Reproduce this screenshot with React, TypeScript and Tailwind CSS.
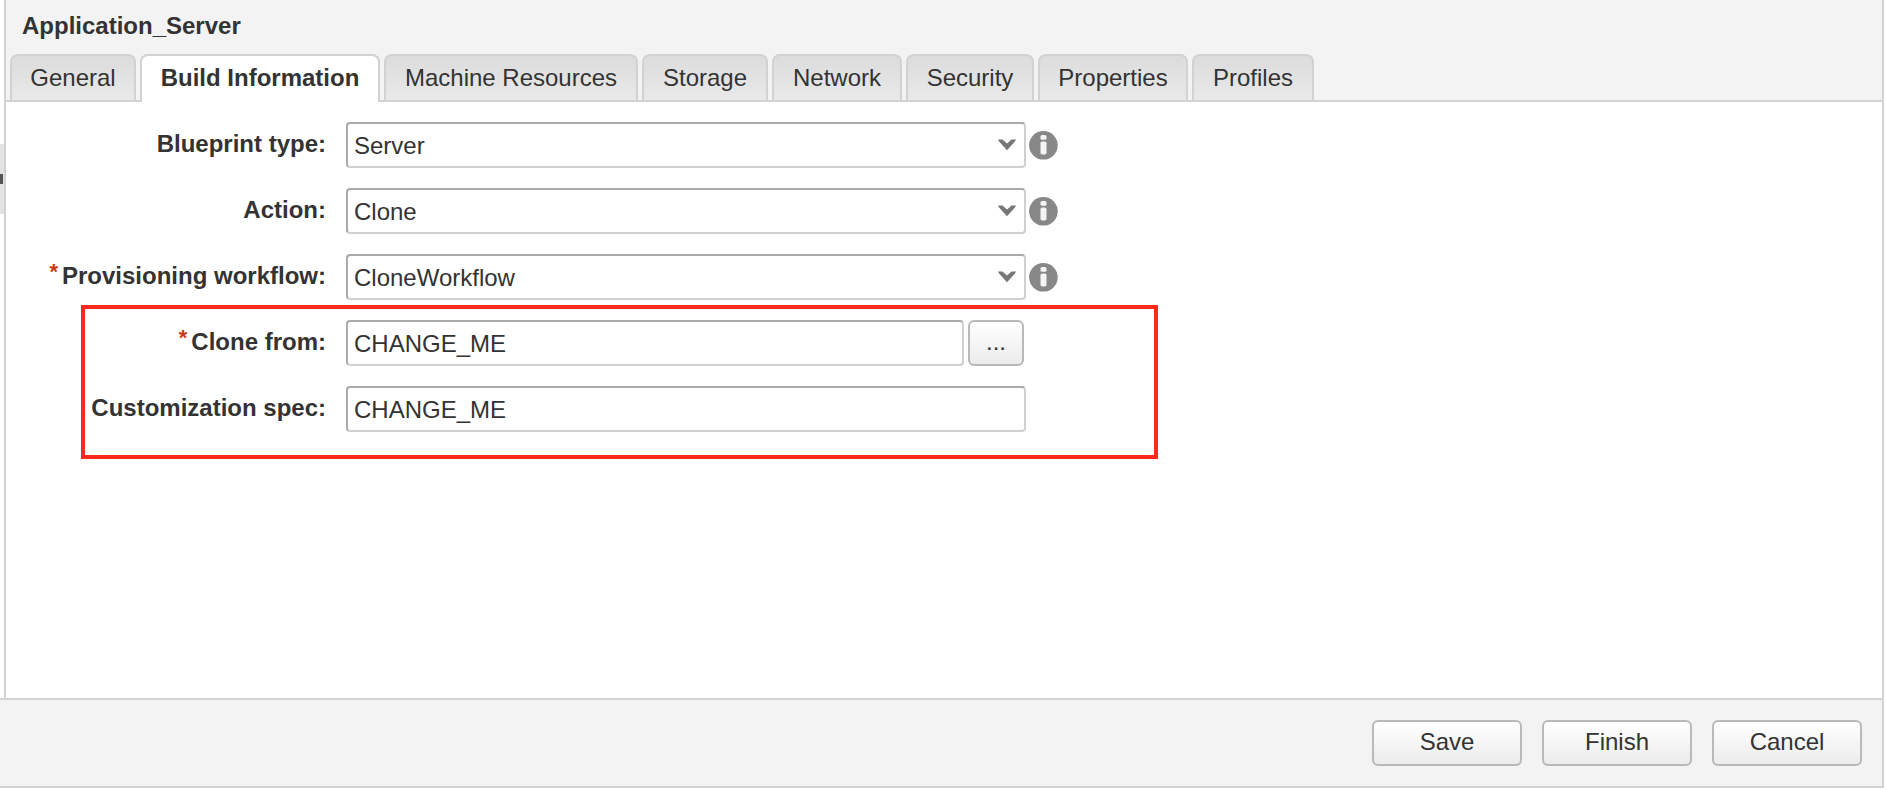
import { useState } from "react"
import type { ReactNode } from "react"
import clsx from "clsx"

const tabs = [
  { name: "General", width: "w-[126px]" },
  { name: "Build Information", width: "w-[240px]" },
  { name: "Machine Resources", width: "w-[254px]" },
  { name: "Storage", width: "w-[126px]" },
  { name: "Network", width: "w-[130px]" },
  { name: "Security", width: "w-[128px]" },
  { name: "Properties", width: "w-[150px]" },
  { name: "Profiles", width: "w-[122px]" },
]

const fieldStyle =
  "h-[46px] w-full rounded border-2 border-t-[#aaaaaa] border-l-[#aaaaaa] border-r-[#d0d0d0] border-b-[#d0d0d0] bg-white px-1.5 pt-0.5 text-[#333333] outline-none"

const buttonStyle =
  "h-[46px] rounded-md border-2 border-[#b9b9b9] bg-gradient-to-b from-white to-[#ececec] pb-0.5 text-[#333333]"

function InfoIcon() {
  return (
    <svg className="h-[30px] w-[30px]" viewBox="0 0 30 30" aria-hidden="true">
      <circle cx="15.4" cy="15.3" r="14.3" fill="#888888" />
      <rect x="12.5" y="5" width="6" height="4.8" rx="1.6" fill="#f4f4f4" />
      <rect x="12.5" y="11.6" width="6" height="12.8" rx="1.6" fill="#f4f4f4" />
    </svg>
  )
}

function ChevronIcon() {
  return (
    <svg
      className="pointer-events-none absolute top-[17px] right-[9px] h-3 w-5"
      viewBox="0 0 20 12"
      aria-hidden="true"
    >
      <path d="M0.8 0.6 L5.5 0.6 L10 4.6 L14.5 0.6 L19.2 0.6 L17.5 3 L10 11.2 L2.5 3 Z" fill="#777777" />
    </svg>
  )
}

function FormRow({ id, label, required, children }: { id: string; label: string; required?: boolean; children: ReactNode }) {
  return (
    <div className="flex items-center gap-5">
      <label htmlFor={id} className="flex w-80 shrink-0 justify-end gap-1 pb-0.5 font-bold whitespace-nowrap">
        {required && <span className="-mt-1 text-[22px] text-[#cc3a14]">*</span>}
        {label}
      </label>
      {children}
    </div>
  )
}

function SelectRow({ id, label, value, required }: { id: string; label: string; value: string; required?: boolean }) {
  return (
    <FormRow id={id} label={label} required={required}>
      <div className="flex items-center gap-0.5">
        <div className="relative w-[680px]">
          <select id={id} className={clsx(fieldStyle, "appearance-none")} defaultValue={value}>
            <option>{value}</option>
          </select>
          <ChevronIcon />
        </div>
        <button type="button" aria-label={`About ${label}`}>
          <InfoIcon />
        </button>
      </div>
    </FormRow>
  )
}

export default function App() {
  const [activeTab, setActiveTab] = useState("Build Information")
  const [cloneFrom, setCloneFrom] = useState("CHANGE_ME")
  const [customSpec, setCustomSpec] = useState("CHANGE_ME")

  return (
    <div className="flex min-h-screen flex-col bg-white pr-0.5 pb-0.5 font-['Liberation_Sans',Arial,sans-serif] text-2xl leading-7 text-[#333333]">
      <div className="flex flex-1 border-r-2 border-[#d2d2d2]">
        {/* Collapse handle of the side panel */}
        <div className="w-1 shrink-0 pt-36">
          <button
            type="button"
            aria-label="Collapse panel"
            className="flex h-[70px] w-1 items-center overflow-hidden bg-[#e2e2e2]"
          >
            <span className="h-2.5 w-[3px] bg-[#555555]" />
          </button>
        </div>

        <div className="flex flex-1 flex-col border-l-2 border-[#d2d2d2]">
          <header className="border-b-2 border-[#d2d2d2] bg-[#f3f3f3]">
            <h1 className="px-4 pt-3 pb-3.5 font-bold">Application_Server</h1>
            <nav className="flex gap-1 px-1" role="tablist">
              {tabs.map((tab) => (
                <button
                  key={tab.name}
                  type="button"
                  role="tab"
                  aria-selected={tab.name === activeTab}
                  onClick={() => setActiveTab(tab.name)}
                  className={clsx(
                    "shrink-0 rounded-t-lg border-2 border-b-0 border-[#d2d2d2] whitespace-nowrap",
                    tab.width,
                    tab.name === activeTab
                      ? "-mb-0.5 h-12 bg-white pb-0.5 font-bold"
                      : "h-[46px] bg-gradient-to-b from-[#dcdcdc] to-[#e9e9e9]"
                  )}
                >
                  {tab.name}
                </button>
              ))}
            </nav>
          </header>

          <main className="flex flex-1 flex-col gap-5 bg-white pt-5">
            <SelectRow id="blueprint-type" label="Blueprint type:" value="Server" />
            <SelectRow id="action" label="Action:" value="Clone" />
            <SelectRow id="workflow" label="Provisioning workflow:" value="CloneWorkflow" required />

            <div className="relative flex flex-col gap-5">
              {/* Highlight around the clone settings */}
              <div className="pointer-events-none absolute -top-[15px] -bottom-[27px] left-[75px] w-[1077px] border-4 border-[#fb2a1d]" />
              <FormRow id="clone-from" label="Clone from:" required>
                <div className="flex w-[678px] gap-1">
                  <input
                    id="clone-from"
                    type="text"
                    className={fieldStyle}
                    value={cloneFrom}
                    onChange={(e) => setCloneFrom(e.target.value)}
                  />
                  <button type="button" aria-label="Browse" className={clsx(buttonStyle, "w-14 shrink-0")}>
                    ...
                  </button>
                </div>
              </FormRow>
              <FormRow id="custom-spec" label="Customization spec:">
                <div className="w-[680px]">
                  <input
                    id="custom-spec"
                    type="text"
                    className={fieldStyle}
                    value={customSpec}
                    onChange={(e) => setCustomSpec(e.target.value)}
                  />
                </div>
              </FormRow>
            </div>
          </main>
        </div>
      </div>

      <footer className="flex justify-end gap-5 border-y-2 border-r-2 border-[#d2d2d2] bg-[#f3f3f3] p-5">
        <button type="button" className={clsx(buttonStyle, "w-[150px]")}>Save</button>
        <button type="button" className={clsx(buttonStyle, "w-[150px]")}>Finish</button>
        <button type="button" className={clsx(buttonStyle, "w-[150px]")}>Cancel</button>
      </footer>
    </div>
  )
}
